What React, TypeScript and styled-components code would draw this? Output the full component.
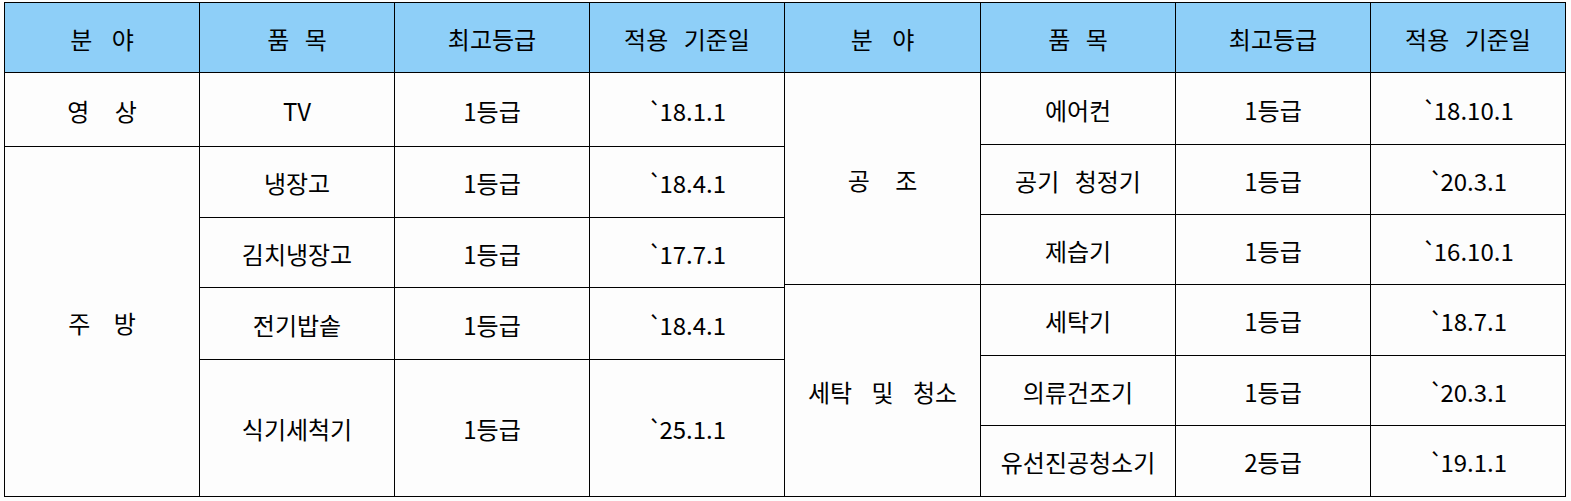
import React from "react";
import styled, { createGlobalStyle } from "styled-components";

const GlobalStyle = createGlobalStyle`
  html, body {
    margin: 0;
    padding: 0;
    background: #fdfdfd;
  }
  * { box-sizing: border-box; }
`;

const Page = styled.div`
  padding: 2px 0 0 4px;
  font-family: "Noto Sans CJK KR", "Noto Sans", sans-serif;
  color: #000;
`;

const Board = styled.div`
  display: flex;
  align-items: flex-start;
`;

const Panel = styled.div<{ $rows: string; $first?: boolean; $cols: string }>`
  display: grid;
  grid-template-columns: ${(p) => p.$cols};
  grid-template-rows: ${(p) => p.$rows};
  border-top: 1px solid #000;
  border-left: ${(p) => (p.$first ? "1px solid #000" : "none")};
`;

const Cell = styled.div<{ $head?: boolean; $span?: number; $ws?: number }>`
  display: flex;
  align-items: center;
  justify-content: center;
  border-right: 1px solid #000;
  border-bottom: 1px solid #000;
  background: ${(p) => (p.$head ? "#8ecff8" : "#fdfdfd")};
  grid-row: ${(p) => (p.$span ? `span ${p.$span}` : "auto")};
  font-size: 24px;
  font-weight: 400;
  line-height: 1;
  white-space: pre;
  word-spacing: ${(p) => p.$ws ?? 10}px;
  padding-top: 2px;
`;

const Backtick = styled.span`
  margin-right: -3px;
`;

const headers: [string, number][] = [
  ["분 야", 14],
  ["품 목", 10],
  ["최고등급", 0],
  ["적용 기준일", 10],
];

type Item = { name: string; grade: string; date: string };
type Group = { field: string; ws: number; items: Item[] };

const leftGroups: Group[] = [
  { field: "영 상", ws: 20, items: [{ name: "TV", grade: "1등급", date: "18.1.1" }] },
  {
    field: "주 방",
    ws: 18,
    items: [
      { name: "냉장고", grade: "1등급", date: "18.4.1" },
      { name: "김치냉장고", grade: "1등급", date: "17.7.1" },
      { name: "전기밥솥", grade: "1등급", date: "18.4.1" },
      { name: "식기세척기", grade: "1등급", date: "25.1.1" },
    ],
  },
];

const rightGroups: Group[] = [
  {
    field: "공 조",
    ws: 20,
    items: [
      { name: "에어컨", grade: "1등급", date: "18.10.1" },
      { name: "공기 청정기", grade: "1등급", date: "20.3.1" },
      { name: "제습기", grade: "1등급", date: "16.10.1" },
    ],
  },
  {
    field: "세탁 및 청소",
    ws: 14,
    items: [
      { name: "세탁기", grade: "1등급", date: "18.7.1" },
      { name: "의류건조기", grade: "1등급", date: "20.3.1" },
      { name: "유선진공청소기", grade: "2등급", date: "19.1.1" },
    ],
  },
];

function Half({
  groups,
  rows,
  cols,
  first,
}: {
  groups: Group[];
  rows: string;
  cols: string;
  first?: boolean;
}) {
  return (
    <Panel $rows={rows} $cols={cols} $first={first}>
      {headers.map(([h, ws]) => (
        <Cell key={h} $head $ws={ws}>
          {h}
        </Cell>
      ))}
      {groups.map((g) =>
        g.items.map((it, i) => (
          <React.Fragment key={g.field + it.name}>
            {i === 0 && (
              <Cell $span={g.items.length} $ws={g.ws}>
                {g.field}
              </Cell>
            )}
            <Cell>{it.name}</Cell>
            <Cell>{it.grade}</Cell>
            <Cell>
              <Backtick>`</Backtick>
              {it.date}
            </Cell>
          </React.Fragment>
        ))
      )}
    </Panel>
  );
}

export default function App() {
  return (
    <>
      <GlobalStyle />
      <Page>
        <Board>
          <Half
            first
            groups={leftGroups}
            cols="195px 195px 195px 195px"
            rows="70px 74px 71px 70px 72px 137px"
          />
          <Half
            groups={rightGroups}
            cols="196px 195px 195px 195px"
            rows="70px 72px 70px 70px 71px 70px 71px"
          />
        </Board>
      </Page>
    </>
  );
}
